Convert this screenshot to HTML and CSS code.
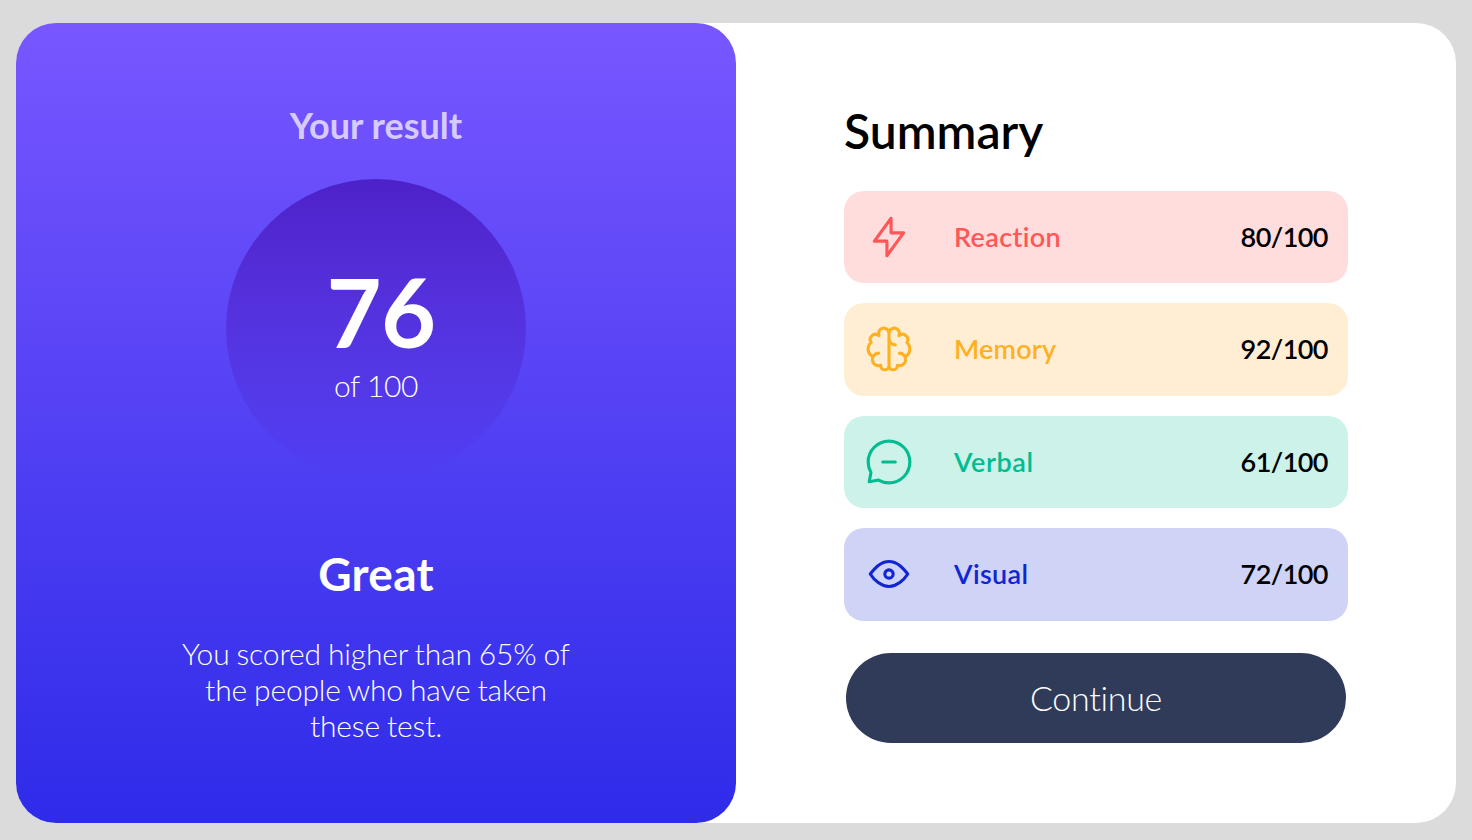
FILE: index.html
```html
<!DOCTYPE html>
<html lang="en">
<head>
<meta charset="utf-8">
<title>Results summary</title>
<link rel="stylesheet" href="styles.css">
</head>
<body>
<main class="card">
  <section class="result">
    <h2 class="result-title">Your result</h2>
    <div class="score">
      <span class="score-value">76</span>
      <span class="score-total">of 100</span>
    </div>
    <h1 class="rating">Great</h1>
    <p class="description">You scored higher than 65% of the people who have taken these test.</p>
  </section>
  <section class="summary">
    <h1 class="summary-title">Summary</h1>
    <ul class="list">
      <li class="row reaction">
        <svg class="icon" viewBox="0 0 20 20"><path d="M10.833 8.333V2.5l-6.666 9.167h5V17.5l6.666-9.167h-5Z"/></svg>
        <span class="label">Reaction</span><span class="points">80/100</span>
      </li>
      <li class="row memory">
        <svg class="icon" viewBox="0 0 20 20"><path d="M5.833 11.667a2.5 2.5 0 1 0 .834 4.858M3.553 13.004a3.333 3.333 0 0 1-.728-5.53m.025-.067a2.083 2.083 0 0 1 2.983-2.824m.199.054A2.083 2.083 0 1 1 10 3.75v12.917a1.667 1.667 0 0 1-3.333 0M10 5.833a2.5 2.5 0 0 0 2.5 2.5m1.667 3.334a2.5 2.5 0 1 1-.834 4.858m3.114-3.521a3.333 3.333 0 0 0 .728-5.53m-.025-.067a2.083 2.083 0 0 0-2.983-2.824m-.199.054A2.083 2.083 0 1 0 10 3.75v12.917a1.667 1.667 0 0 0 3.333 0"/></svg>
        <span class="label">Memory</span><span class="points">92/100</span>
      </li>
      <li class="row verbal">
        <svg class="icon" viewBox="0 0 20 20"><path d="M7.5 10h5M10 18.333A8.333 8.333 0 1 0 1.667 10c0 1.518.406 2.942 1.115 4.167l-.699 3.75 3.75-.699A8.295 8.295 0 0 0 10 18.333Z"/></svg>
        <span class="label">Verbal</span><span class="points">61/100</span>
      </li>
      <li class="row visual">
        <svg class="icon" viewBox="0 0 20 20"><path d="M10 11.667a1.667 1.667 0 1 0 0-3.334 1.667 1.667 0 0 0 0 3.334Z"/><path d="M17.5 10c-1.574 2.492-4.402 5-7.5 5s-5.926-2.508-7.5-5C4.416 7.632 6.66 5 10 5s5.584 2.632 7.5 5Z"/></svg>
        <span class="label">Visual</span><span class="points">72/100</span>
      </li>
    </ul>
    <button class="continue" type="button">Continue</button>
  </section>
</main>
</body>
</html>
```

FILE: styles.css
```css
* { box-sizing: border-box; }
body {
  margin: 0;
  padding: 23px 16px 17px;
  background: #dbdbdb;
  font-family: Lato, sans-serif;
  font-variant-ligatures: none;
}
h1, h2, p, ul { margin: 0; padding: 0; }
.card {
  display: flex;
  height: 800px;
  background: #fff;
  border-radius: 40px;
}
.result {
  width: 720px;
  padding-top: 80px;
  display: flex;
  flex-direction: column;
  align-items: center;
  border-radius: 40px;
  background: linear-gradient(#7857ff, #2e2be9);
  color: #fff;
  text-align: center;
}
.result-title {
  font-size: 36px;
  line-height: 44px;
  font-weight: 700;
  color: #d6cbff;
}
.score {
  width: 300px;
  height: 300px;
  margin-top: 32px;
  padding-top: 74px;
  display: flex;
  flex-direction: column;
  align-items: center;
  border-radius: 50%;
  background: linear-gradient(#4d21c9, rgba(37, 33, 201, 0));
}
.score-value {
  padding-left: 10px;
  font-size: 95px;
  line-height: 116px;
  font-weight: 700;
  letter-spacing: -0.5px;
}
.score-total {
  margin-top: -2px;
  font-size: 30px;
  line-height: 36px;
  font-weight: 300;
  letter-spacing: -0.4px;
}
.rating {
  margin-top: 66px;
  font-size: 46px;
  line-height: 58px;
  font-weight: 700;
  letter-spacing: 0.3px;
}
.description {
  width: 400px;
  margin-top: 32px;
  font-size: 30px;
  line-height: 36px;
  font-weight: 300;
  letter-spacing: -0.15px;
  word-spacing: -1px;
}
.summary {
  width: 720px;
  padding: 79px 108px 0;
}
.summary-title {
  font-size: 48px;
  line-height: 58px;
  font-weight: 600;
}
.list {
  margin-top: 30.5px;
  display: flex;
  flex-direction: column;
  gap: 20px;
  list-style: none;
}
.row {
  height: 92.5px;
  padding: 0 20px;
  display: flex;
  align-items: center;
  border-radius: 20px;
  font-size: 27px;
  line-height: 32px;
  font-weight: 600;
}
.icon {
  width: 50px;
  height: 50px;
  fill: none;
  stroke: currentColor;
  stroke-width: 1.25;
  stroke-linecap: round;
  stroke-linejoin: round;
}
.label { margin-left: 40px; letter-spacing: 0.35px; }
.memory .label { letter-spacing: 0.2px; }
.verbal .label { letter-spacing: 0.6px; }
.points { margin-left: auto; color: #000; letter-spacing: -0.55px; }
.reaction { background: #ffdddd; color: #ff5757; }
.memory { background: #ffeed3; color: #ffb01f; }
.verbal { background: #ccf2e9; color: #00bd91; }
.visual { background: #cfd3f6; color: #1125d4; }
.continue {
  display: block;
  width: 500px;
  height: 90px;
  margin: 32.5px auto 0;
  padding: 0 0 2px;
  border: 0;
  border-radius: 45px;
  background: #303b5a;
  color: #fff;
  font: 300 34px Lato, sans-serif;
  font-variant-ligatures: none;
  letter-spacing: -0.3px;
}
```
